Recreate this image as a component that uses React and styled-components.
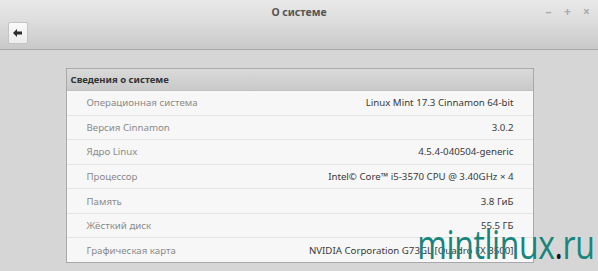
import React from "react";
import styled, { createGlobalStyle } from "styled-components";

const Global = createGlobalStyle`
  html, body { margin: 0; padding: 0; }
  body { width: 598px; height: 271px; overflow: hidden; background: #d5d5d5; font-family: "Noto Sans", "Open Sans", sans-serif; }
`;

const Window = styled.div`
  position: relative;
  width: 598px;
  height: 271px;
  background: #d6d6d6;
  display: flex;
  flex-direction: column;
  overflow: hidden;
`;

const Header = styled.div`
  height: 49px;
  border-bottom: 1px solid #a8a8a8;
  background: linear-gradient(#e9e9e9 0%, #dedede 40%, #c9c9c9 100%);
  display: flex;
  flex-direction: column;
`;

const TitleBar = styled.div`
  height: 22px;
  display: grid;
  grid-template-columns: 1fr auto 1fr;
  align-items: center;
`;

const Title = styled.div`
  grid-column: 2;
  font-size: 10.5px;
  font-weight: bold;
  color: #555;
  padding-top: 1px;
`;

const Controls = styled.div`
  grid-column: 3;
  justify-self: end;
  display: flex;
  gap: 10px;
  padding-right: 7px;
  color: #aaa;
  font-size: 12px;
  font-weight: bold;
`;

const Ctrl = styled.span`
  width: 9px;
  text-align: center;
`;

const Toolbar = styled.div`
  display: flex;
  padding: 0 8px;
`;

const BackButton = styled.div`
  width: 20px;
  height: 22px;
  box-sizing: border-box;
  border: 1px solid #c4c4c4;
  border-radius: 2px;
  background: linear-gradient(#fafafa, #ececec);
  display: flex;
  align-items: center;
  justify-content: center;
`;

const Body = styled.div`
  flex: 1;
  display: flex;
  justify-content: center;
  padding-top: 18px;
  padding-left: 1px;
`;

const Card = styled.div`
  width: 468px;
  height: 195px;
  box-sizing: border-box;
  border: 1px solid #a9a9a9;
  background: #f7f7f7;
  display: flex;
  flex-direction: column;
`;

const CardHead = styled.div`
  height: 21px;
  border-bottom: 1px solid #c2c2c2;
  background: linear-gradient(#dadada, #c9c9c9);
  display: flex;
  align-items: center;
  padding-left: 4px;
  font-size: 9.5px;
  font-weight: bold;
  color: #333;
`;

const Row = styled.div`
  flex: 1;
  display: flex;
  align-items: center;
  justify-content: space-between;
  padding: 0 19px 0 20px;
  font-size: 9.7px;
  border-top: ${p => (p.$first ? "none" : "1px solid #e4e4e4")};
`;

const Label = styled.span`
  color: #8a8a8a;
`;

const Value = styled.span`
  color: #3a3a3a;
`;

const Watermark = styled.div`
  position: absolute;
  right: 3px;
  top: 224px;
  font-family: "Open Sans", "Noto Sans", sans-serif;
  font-size: 40px;
  line-height: 1;
  letter-spacing: -0.5px;
  color: #17857c;
  transform: scaleX(0.8);
  transform-origin: right center;
  span { color: #111; }
`;

const rows = [
  ["Операционная система", "Linux Mint 17.3 Cinnamon 64-bit"],
  ["Версия Cinnamon", "3.0.2"],
  ["Ядро Linux", "4.5.4-040504-generic"],
  ["Процессор", "Intel© Core™ i5-3570 CPU @ 3.40GHz × 4"],
  ["Память", "3.8 ГиБ"],
  ["Жёсткий диск", "55.5 ГБ"],
  ["Графическая карта", "NVIDIA Corporation G73GL [Quadro FX 3500]"],
];

export default function App() {
  return (
    <Window>
      <Global />
      <Header>
        <TitleBar>
          <Title>О системе</Title>
          <Controls>
            <Ctrl>–</Ctrl>
            <Ctrl>+</Ctrl>
            <Ctrl>×</Ctrl>
          </Controls>
        </TitleBar>
        <Toolbar>
          <BackButton>
            <svg width="10" height="8" viewBox="0 0 10 8">
              <path d="M0 4 L4 0 L4 2.5 L9 2.5 L9 5.5 L4 5.5 L4 8 Z" fill="#2b2b2b" />
            </svg>
          </BackButton>
        </Toolbar>
      </Header>
      <Body>
        <Card>
          <CardHead>Сведения о системе</CardHead>
          {rows.map(([l, v], i) => (
            <Row key={l} $first={i === 0}>
              <Label>{l}</Label>
              <Value>{v}</Value>
            </Row>
          ))}
        </Card>
      </Body>
      <Watermark>mintlinux<span>.</span>ru</Watermark>
    </Window>
  );
}
